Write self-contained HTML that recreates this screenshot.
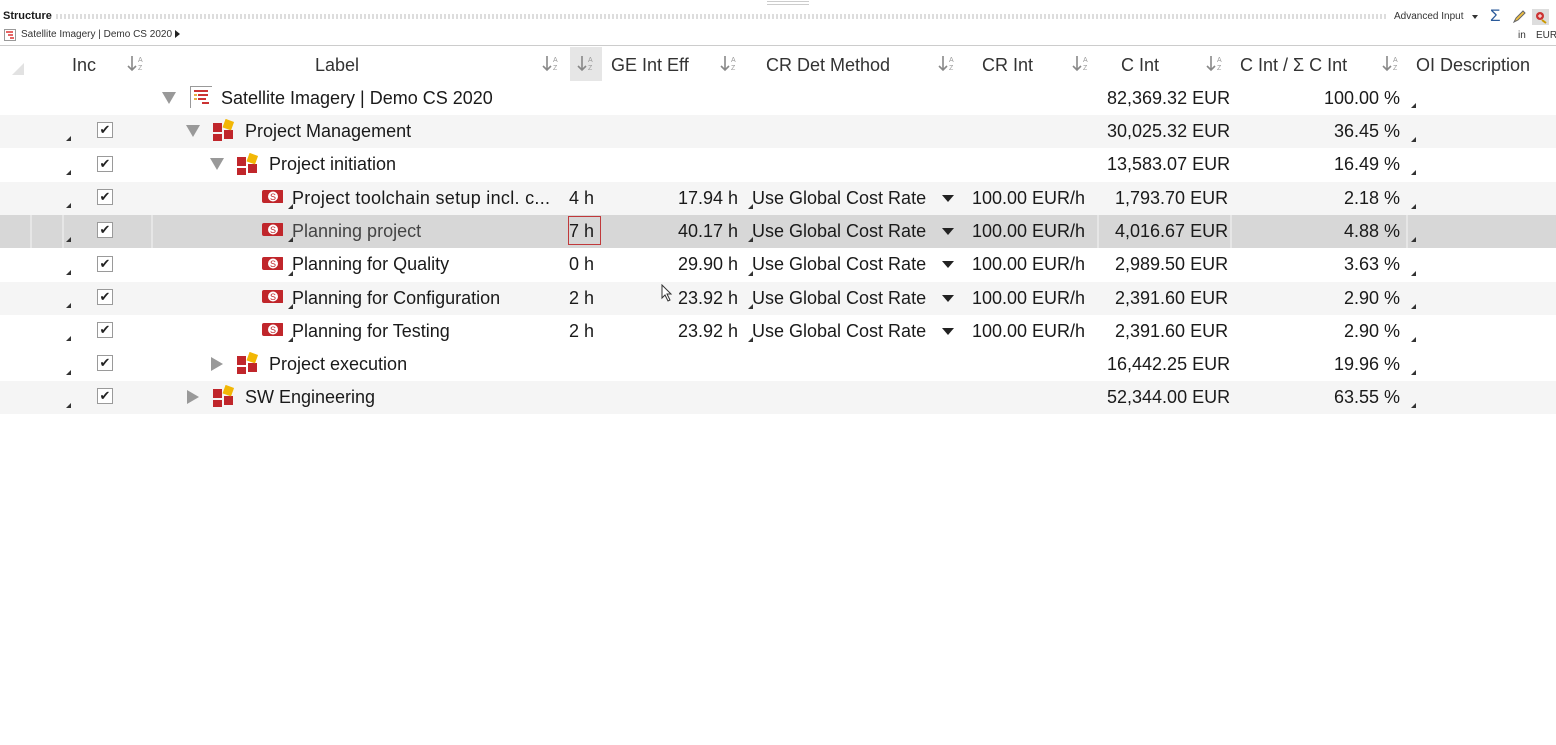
<!DOCTYPE html>
<html><head><meta charset="utf-8"><style>
*{margin:0;padding:0;box-sizing:border-box}
body{width:1556px;height:745px;background:#fff;font-family:"Liberation Sans",sans-serif;color:#1a1a1a;position:relative;overflow:hidden}
.a{position:absolute;white-space:nowrap}
.t{font-size:18px;line-height:33px;height:33px}
.h{font-size:18px;line-height:36px;top:47px;color:#333}
.r{text-align:right}
.row{position:absolute;left:0;width:1556px;height:33.4px}
.cb{position:absolute;left:97px;width:16px;height:16px;border:1px solid #9a9a9a;background:#fff;font-size:13px;line-height:14px;text-align:center;color:#222}
.mk{position:absolute;width:0;height:0;border-left:5px solid transparent;border-bottom:5px solid #333}
.sort{position:absolute;top:55px}
.tri{position:absolute;width:0;height:0}
.down{border-left:7px solid transparent;border-right:7px solid transparent;border-top:12px solid #999}
.right{border-top:7px solid transparent;border-bottom:7px solid transparent;border-left:12px solid #999}
.ico{position:absolute;width:22px;height:22px}
.dd{position:absolute;width:0;height:0;border-left:6px solid transparent;border-right:6px solid transparent;border-top:7px solid #222}
</style></head><body>
<svg width="0" height="0" style="position:absolute"><defs><g id="s"><path d="M5 1v14M1 11l4 4 4-4" stroke="#888" stroke-width="1.6" fill="none"/><text x="11" y="7" font-size="7" fill="#999" font-family="Liberation Sans">A</text><text x="11" y="15" font-size="7" fill="#999" font-family="Liberation Sans">Z</text></g></defs></svg>
<div class="a" style="left:3px;top:10px;font-size:11px;font-weight:bold">Structure</div>
<div class="a" style="left:56px;top:14px;width:1330px;height:5px;background:repeating-linear-gradient(90deg,#ddd 0 2px,#fff 2px 4px)"></div>
<div class="a" style="left:767px;top:1px;width:42px;height:4px;border-top:1px solid #ccc;border-bottom:1px solid #ccc"></div>
<svg class="a" style="left:4px;top:29px" width="12" height="12"><rect x="0.5" y="0.5" width="11" height="11" fill="#fff" stroke="#999"/><path d="M2 3h7M4 6h5M6 9h4" stroke="#d33" stroke-width="1.5"/></svg>
<div class="a" style="left:21px;top:29px;font-size:10px;color:#333">Satellite Imagery | Demo CS 2020</div>
<div class="a" style="left:175px;top:30px;width:0;height:0;border-top:4px solid transparent;border-bottom:4px solid transparent;border-left:5px solid #222"></div>
<div class="a" style="left:1394px;top:11px;font-size:10px;color:#333">Advanced Input</div>
<div class="a" style="left:1472px;top:15px;border-left:3px solid transparent;border-right:3px solid transparent;border-top:4px solid #333;width:0"></div>
<div class="a" style="left:1490px;top:6px;font-size:17px;color:#2a5a9a">Σ</div>
<svg class="a" style="left:1512px;top:10px" width="14" height="14"><path d="M2 12l2-4 7-7 2 2-7 7z" fill="#f0c040" stroke="#666"/></svg>
<div class="a" style="left:1532px;top:9px;width:17px;height:16px;background:#ddd"></div>
<svg class="a" style="left:1534px;top:10px" width="14" height="14"><circle cx="6" cy="6" r="4" fill="#c33"/><path d="M4 6h4M6 4v4" stroke="#fff"/><path d="M8 10l4 3" stroke="#c90" stroke-width="2"/></svg>
<div class="a" style="left:1518px;top:30px;font-size:10px;color:#333">in</div>
<div class="a" style="left:1536px;top:30px;font-size:10px;color:#333">EUR</div>
<div class="a" style="left:0;top:45px;width:1556px;height:1px;background:#ccc"></div>
<div class="a" style="left:12px;top:63px;width:0;height:0;border-left:12px solid transparent;border-bottom:12px solid #e2e2e2"></div>
<div class="a" style="left:570px;top:47px;width:32px;height:34px;background:#e6e6e6"></div>
<div class="a h" style="left:72px">Inc</div>
<div class="a h" style="left:315px">Label</div>
<div class="a h" style="left:611px">GE Int Eff</div>
<div class="a h" style="left:766px">CR Det Method</div>
<div class="a h" style="left:982px">CR Int</div>
<div class="a h" style="left:1121px">C Int</div>
<div class="a h" style="left:1240px">C Int / Σ C Int</div>
<div class="a h" style="left:1416px">OI Description</div>
<svg class="sort" style="left:127px" width="18" height="17"><use href="#s"/></svg>
<svg class="sort" style="left:542px" width="18" height="17"><use href="#s"/></svg>
<svg class="sort" style="left:577px" width="18" height="17"><use href="#s"/></svg>
<svg class="sort" style="left:720px" width="18" height="17"><use href="#s"/></svg>
<svg class="sort" style="left:938px" width="18" height="17"><use href="#s"/></svg>
<svg class="sort" style="left:1072px" width="18" height="17"><use href="#s"/></svg>
<svg class="sort" style="left:1206px" width="18" height="17"><use href="#s"/></svg>
<svg class="sort" style="left:1382px" width="18" height="17"><use href="#s"/></svg>

<div class="row" style="top:115px;background:#f5f5f5"></div>
<div class="row" style="top:182px;background:#f5f5f5"></div>
<div class="row" style="top:215px;background:#d7d7d7"></div>
<div class="row" style="top:282px;background:#f5f5f5"></div>
<div class="row" style="top:381px;height:33px;background:#f5f5f5"></div>
<div class="a" style="left:30px;top:215px;width:2px;height:33px;background:#e6e6e6"></div>
<div class="a" style="left:62px;top:215px;width:2px;height:33px;background:#e6e6e6"></div>
<div class="a" style="left:151px;top:215px;width:2px;height:33px;background:#e6e6e6"></div>
<div class="a" style="left:1097px;top:215px;width:2px;height:33px;background:#e6e6e6"></div>
<div class="a" style="left:1230px;top:215px;width:2px;height:33px;background:#e6e6e6"></div>
<div class="a" style="left:1406px;top:215px;width:2px;height:33px;background:#e6e6e6"></div>
<div class="a" style="left:568px;top:216px;width:33px;height:29px;border:1px solid #c0393b"></div>

<div class="tri down" style="left:162px;top:92px"></div>
<svg class="ico" style="left:190px;top:86px" width="24" height="24"><rect x="0.5" y="0.5" width="22" height="22" fill="#fff" stroke="#999"/><path d="M4 5h14M8 9h10M8 13h8M12 17h7" stroke="#c33" stroke-width="2"/><path d="M4 9h3M4 13h3" stroke="#e8b040" stroke-width="2"/></svg>
<div class="a t" style="left:221px;top:82px">Satellite Imagery | Demo CS 2020</div>
<div class="a t" style="left:1107px;top:82px">82,369.32 EUR</div>
<div class="a t r" style="left:1240px;width:160px;top:82px">100.00 %</div>
<div class="mk" style="left:1411px;top:103px"></div>

<div class="mk" style="left:66px;top:136px"></div><div class="cb" style="top:122px">✔</div>
<div class="tri down" style="left:186px;top:125px"></div>
<svg class="ico" style="left:213px;top:119px" width="24" height="24"><rect x="0" y="4" width="9" height="9" fill="#c0262b"/><rect x="11" y="11" width="9" height="9" fill="#c0262b"/><rect x="0" y="15" width="9" height="8" fill="#c0262b"/><rect x="11" y="1" width="9" height="9" fill="#f2b705" transform="rotate(20 15 5)"/></svg>
<div class="a t" style="left:245px;top:115px">Project Management</div>
<div class="a t" style="left:1107px;top:115px">30,025.32 EUR</div>
<div class="a t r" style="left:1240px;width:160px;top:115px">36.45 %</div>
<div class="mk" style="left:1411px;top:137px"></div>

<div class="mk" style="left:66px;top:170px"></div><div class="cb" style="top:156px">✔</div>
<div class="tri down" style="left:210px;top:158px"></div>
<svg class="ico" style="left:237px;top:153px" width="24" height="24"><rect x="0" y="4" width="9" height="9" fill="#c0262b"/><rect x="11" y="11" width="9" height="9" fill="#c0262b"/><rect x="0" y="15" width="9" height="8" fill="#c0262b"/><rect x="11" y="1" width="9" height="9" fill="#f2b705" transform="rotate(20 15 5)"/></svg>
<div class="a t" style="left:269px;top:148px">Project initiation</div>
<div class="a t" style="left:1107px;top:148px">13,583.07 EUR</div>
<div class="a t r" style="left:1240px;width:160px;top:148px">16.49 %</div>
<div class="mk" style="left:1411px;top:170px"></div>

<div class="mk" style="left:66px;top:203px"></div><div class="cb" style="top:189px">✔</div>
<svg class="ico" style="left:261px;top:189px" width="24" height="16"><rect x="1" y="1" width="22" height="13" rx="2" fill="#c0262b"/><ellipse cx="12" cy="7.5" rx="5" ry="5" fill="#fff"/><text x="12" y="11" font-size="9" text-anchor="middle" fill="#c0262b" font-family="Liberation Sans">S</text></svg>
<div class="a t" style="left:292px;top:182px;letter-spacing:0.3px">Project toolchain setup incl. c...</div>
<div class="a t" style="left:569px;top:182px">4 h</div>
<div class="a t r" style="left:640px;width:98px;top:182px">17.94 h</div>
<div class="a t" style="left:752px;top:182px">Use Global Cost Rate</div><div class="dd" style="left:942px;top:195px"></div>
<div class="a t" style="left:972px;top:182px">100.00 EUR/h</div>
<div class="a t" style="left:1115px;top:182px">1,793.70 EUR</div>
<div class="a t r" style="left:1240px;width:160px;top:182px">2.18 %</div>
<div class="mk" style="left:1411px;top:204px"></div><div class="mk" style="left:288px;top:204px"></div><div class="mk" style="left:748px;top:204px"></div>

<div class="mk" style="left:66px;top:237px"></div><div class="cb" style="top:222px">✔</div>
<svg class="ico" style="left:261px;top:222px" width="24" height="16"><rect x="1" y="1" width="22" height="13" rx="2" fill="#c0262b"/><ellipse cx="12" cy="7.5" rx="5" ry="5" fill="#fff"/><text x="12" y="11" font-size="9" text-anchor="middle" fill="#c0262b" font-family="Liberation Sans">S</text></svg>
<div class="a t" style="left:292px;top:215px;color:#444">Planning project</div>
<div class="a t" style="left:569px;top:215px">7 h</div>
<div class="a t r" style="left:640px;width:98px;top:215px">40.17 h</div>
<div class="a t" style="left:752px;top:215px">Use Global Cost Rate</div><div class="dd" style="left:942px;top:228px"></div>
<div class="a t" style="left:972px;top:215px">100.00 EUR/h</div>
<div class="a t" style="left:1115px;top:215px">4,016.67 EUR</div>
<div class="a t r" style="left:1240px;width:160px;top:215px">4.88 %</div>
<div class="mk" style="left:1411px;top:237px"></div><div class="mk" style="left:288px;top:237px"></div><div class="mk" style="left:748px;top:237px"></div>

<div class="mk" style="left:66px;top:270px"></div><div class="cb" style="top:256px">✔</div>
<svg class="ico" style="left:261px;top:256px" width="24" height="16"><rect x="1" y="1" width="22" height="13" rx="2" fill="#c0262b"/><ellipse cx="12" cy="7.5" rx="5" ry="5" fill="#fff"/><text x="12" y="11" font-size="9" text-anchor="middle" fill="#c0262b" font-family="Liberation Sans">S</text></svg>
<div class="a t" style="left:292px;top:248px">Planning for Quality</div>
<div class="a t" style="left:569px;top:248px">0 h</div>
<div class="a t r" style="left:640px;width:98px;top:248px">29.90 h</div>
<div class="a t" style="left:752px;top:248px">Use Global Cost Rate</div><div class="dd" style="left:942px;top:261px"></div>
<div class="a t" style="left:972px;top:248px">100.00 EUR/h</div>
<div class="a t" style="left:1115px;top:248px">2,989.50 EUR</div>
<div class="a t r" style="left:1240px;width:160px;top:248px">3.63 %</div>
<div class="mk" style="left:1411px;top:271px"></div><div class="mk" style="left:288px;top:271px"></div><div class="mk" style="left:748px;top:271px"></div>

<div class="mk" style="left:66px;top:303px"></div><div class="cb" style="top:289px">✔</div>
<svg class="ico" style="left:261px;top:289px" width="24" height="16"><rect x="1" y="1" width="22" height="13" rx="2" fill="#c0262b"/><ellipse cx="12" cy="7.5" rx="5" ry="5" fill="#fff"/><text x="12" y="11" font-size="9" text-anchor="middle" fill="#c0262b" font-family="Liberation Sans">S</text></svg>
<div class="a t" style="left:292px;top:282px">Planning for Configuration</div>
<div class="a t" style="left:569px;top:282px">2 h</div>
<div class="a t r" style="left:640px;width:98px;top:282px">23.92 h</div>
<div class="a t" style="left:752px;top:282px">Use Global Cost Rate</div><div class="dd" style="left:942px;top:295px"></div>
<div class="a t" style="left:972px;top:282px">100.00 EUR/h</div>
<div class="a t" style="left:1115px;top:282px">2,391.60 EUR</div>
<div class="a t r" style="left:1240px;width:160px;top:282px">2.90 %</div>
<div class="mk" style="left:1411px;top:304px"></div><div class="mk" style="left:288px;top:304px"></div><div class="mk" style="left:748px;top:304px"></div>
<svg class="a" style="left:661px;top:284px" width="12" height="18"><path d="M1 1v13l3-3 3 6 2-1-3-6h4z" fill="#fff" stroke="#333"/></svg>

<div class="mk" style="left:66px;top:336px"></div><div class="cb" style="top:322px">✔</div>
<svg class="ico" style="left:261px;top:322px" width="24" height="16"><rect x="1" y="1" width="22" height="13" rx="2" fill="#c0262b"/><ellipse cx="12" cy="7.5" rx="5" ry="5" fill="#fff"/><text x="12" y="11" font-size="9" text-anchor="middle" fill="#c0262b" font-family="Liberation Sans">S</text></svg>
<div class="a t" style="left:292px;top:315px">Planning for Testing</div>
<div class="a t" style="left:569px;top:315px">2 h</div>
<div class="a t r" style="left:640px;width:98px;top:315px">23.92 h</div>
<div class="a t" style="left:752px;top:315px">Use Global Cost Rate</div><div class="dd" style="left:942px;top:328px"></div>
<div class="a t" style="left:972px;top:315px">100.00 EUR/h</div>
<div class="a t" style="left:1115px;top:315px">2,391.60 EUR</div>
<div class="a t r" style="left:1240px;width:160px;top:315px">2.90 %</div>
<div class="mk" style="left:1411px;top:337px"></div><div class="mk" style="left:288px;top:337px"></div><div class="mk" style="left:748px;top:337px"></div>

<div class="mk" style="left:66px;top:370px"></div><div class="cb" style="top:355px">✔</div>
<div class="tri right" style="left:211px;top:357px"></div>
<svg class="ico" style="left:237px;top:352px" width="24" height="24"><rect x="0" y="4" width="9" height="9" fill="#c0262b"/><rect x="11" y="11" width="9" height="9" fill="#c0262b"/><rect x="0" y="15" width="9" height="8" fill="#c0262b"/><rect x="11" y="1" width="9" height="9" fill="#f2b705" transform="rotate(20 15 5)"/></svg>
<div class="a t" style="left:269px;top:348px">Project execution</div>
<div class="a t" style="left:1107px;top:348px">16,442.25 EUR</div>
<div class="a t r" style="left:1240px;width:160px;top:348px">19.96 %</div>
<div class="mk" style="left:1411px;top:370px"></div>

<div class="mk" style="left:66px;top:403px"></div><div class="cb" style="top:388px">✔</div>
<div class="tri right" style="left:187px;top:390px"></div>
<svg class="ico" style="left:213px;top:385px" width="24" height="24"><rect x="0" y="4" width="9" height="9" fill="#c0262b"/><rect x="11" y="11" width="9" height="9" fill="#c0262b"/><rect x="0" y="15" width="9" height="8" fill="#c0262b"/><rect x="11" y="1" width="9" height="9" fill="#f2b705" transform="rotate(20 15 5)"/></svg>
<div class="a t" style="left:245px;top:381px">SW Engineering</div>
<div class="a t" style="left:1107px;top:381px">52,344.00 EUR</div>
<div class="a t r" style="left:1240px;width:160px;top:381px">63.55 %</div>
<div class="mk" style="left:1411px;top:403px"></div>
</body></html>
